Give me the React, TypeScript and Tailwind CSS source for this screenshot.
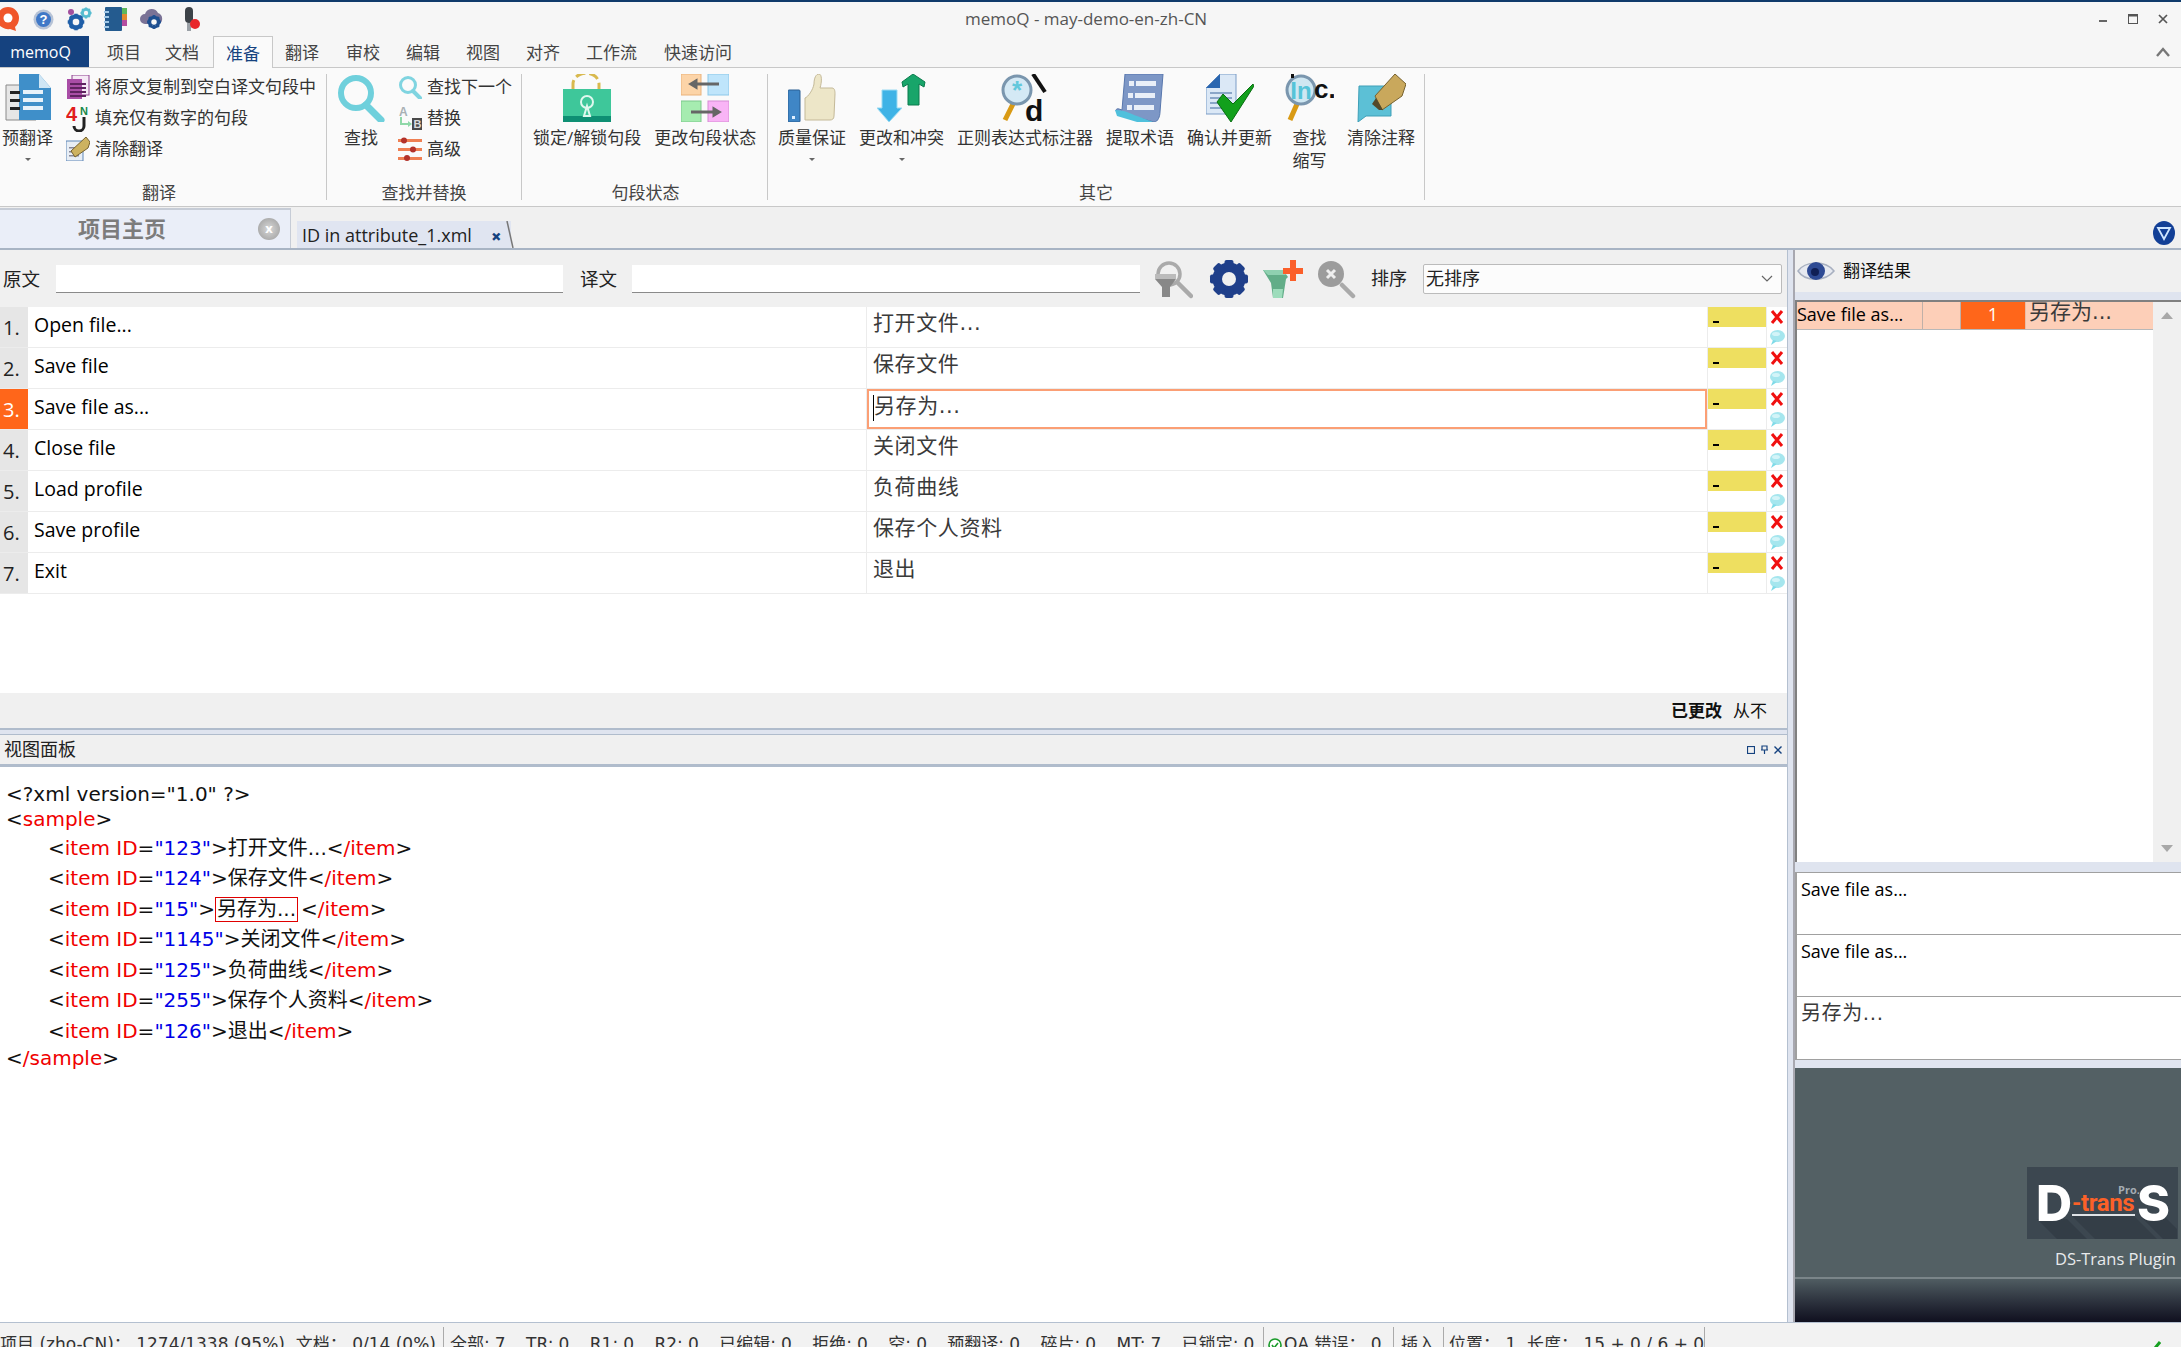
import React from "react";

const Svg = ({ w, h = w, vb, children, className = "" }: { w: number; h?: number; vb?: string; children: React.ReactNode; className?: string }) => (
  <svg width={w} height={h} viewBox={vb ?? `0 0 ${w} ${h}`} className={`shrink-0 block ${className}`}>{children}</svg>
);

/* ---------- quick access icons ---------- */
const QLogo = () => (
  <Svg w={20} h={24} vb="0 0 20 24">
    <path d="M-3 11a11 11 0 0 1 22 0c0 4-1.5 7-4 9l1 4-6-2A11 11 0 0 1-3 11z" fill="#f0562a" />
    <circle cx="8" cy="11" r="4.5" fill="#fff" />
  </Svg>
);
const HelpIcon = () => (
  <Svg w={21} h={21} vb="0 0 21 21">
    <circle cx="10.5" cy="10.5" r="10" fill="#b7c3d6" />
    <circle cx="10.5" cy="10.5" r="7.5" fill="#3f78c7" />
    <text x="10.5" y="15" textAnchor="middle" fontSize="13" fontWeight="700" fill="#fff" fontFamily="Liberation Sans">?</text>
  </Svg>
);
const GearShape = ({ cx, cy, r, fill }: { cx: number; cy: number; r: number; fill: string }) => (
  <g>
    <circle cx={cx} cy={cy} r={r} fill="none" stroke={fill} strokeWidth={r * 0.55} />
    {[0, 45, 90, 135].map((a) => (
      <rect key={a} x={cx - r * 0.28} y={cy - r * 1.38} width={r * 0.56} height={r * 2.76} fill={fill} transform={`rotate(${a} ${cx} ${cy})`} />
    ))}
    <circle cx={cx} cy={cy} r={r * 0.55} fill="#f7f7f7" />
  </g>
);
const GearsIcon = () => (
  <Svg w={25} h={24} vb="0 0 25 24">
    <circle cx="4" cy="5" r="3" fill="#a14f9d" />
    <GearShape cx={19} cy={6} r={4} fill="#56bcd0" />
    <GearShape cx={9} cy={15} r={6} fill="#1f5fa8" />
  </Svg>
);
const NotebookIcon = () => (
  <Svg w={24} h={24} vb="0 0 24 24">
    <rect x="1" y="0" width="17" height="24" rx="1" fill="#245b8f" />
    <path d="M18 1h5v6h-5z" fill="#5cb85c" />
    <path d="M18 7h5v6h-5z" fill="#e08a2e" />
    <path d="M18 13h5v6h-5z" fill="#b34c9f" />
    {[4, 9, 14, 19].map((y) => (
      <rect key={y} x="0" y={y} width="5" height="2" fill="#9fc6e6" />
    ))}
  </Svg>
);
const CloudIcon = () => (
  <Svg w={24} h={24} vb="0 0 24 24">
    <path d="M5 17a5 5 0 0 1 0-10 7 7 0 0 1 13-1 6 6 0 0 1 1 11z" fill="#7a7296" />
    <GearShape cx={14} cy={15} r={5} fill="#1d4f91" />
  </Svg>
);
const MicIcon = () => (
  <Svg w={19} h={24} vb="0 0 19 24">
    <rect x="3" y="0" width="8" height="16" rx="4" fill="#3c4248" />
    <rect x="5" y="16" width="4" height="8" fill="#9aa0a6" />
    <circle cx="13" cy="17" r="5" fill="#e8262a" />
  </Svg>
);

/* ---------- ribbon large icons (48x48) ---------- */
const PreTranslate = () => (
  <Svg w={50} h={48} vb="0 0 50 48">
    <path d="M3 11h30v35H3z" fill="#e6e6e6" stroke="#8a8a8a" />
    <path d="M16 0h20l12 14v32H16z" fill="#3f8fc9" />
    <path d="M36 0l12 14H36z" fill="#cfe6f5" />
    {[16, 24, 32].map((y) => (
      <rect key={y} x="20" y={y} width="20" height="4" fill="#e8f2fa" />
    ))}
    {[17, 25, 33].map((y) => (
      <rect key={y} x="7" y={y} width="10" height="3" fill="#222" />
    ))}
  </Svg>
);
const BigSearch = () => (
  <Svg w={48} h={48}>
    <circle cx="19" cy="19" r="15" fill="none" stroke="#6fd0dc" strokeWidth="6" />
    <path d="M29 31l15 15" stroke="#6fd0dc" strokeWidth="7" strokeLinecap="round" />
  </Svg>
);
const LockIcon = () => (
  <Svg w={48} h={48}>
    <path d="M10 16V10a12 10 0 0 1 26 0v6" fill="none" stroke="#d8b94e" strokeWidth="3" strokeDasharray="10 4" />
    <rect x="0" y="15" width="48" height="33" fill="#3ec79a" />
    <rect x="0" y="42" width="48" height="6" fill="#0e8f73" />
    <circle cx="24" cy="28" r="6" fill="none" stroke="#dff8ee" strokeWidth="2" />
    <path d="M21 42l3-10 3 10z" fill="none" stroke="#dff8ee" strokeWidth="2" />
  </Svg>
);
const StatusIcon = () => (
  <Svg w={48} h={48}>
    <rect x="0" y="0" width="20" height="21" fill="#fcd4a8" stroke="#eab27a" />
    <rect x="27" y="0" width="21" height="21" fill="#bfe5fb" stroke="#8cc7e8" />
    <rect x="0" y="27" width="20" height="21" fill="#a6ecb0" stroke="#7cc88c" />
    <rect x="27" y="27" width="21" height="21" fill="#f9b4f6" stroke="#d68cd4" />
    <path d="M10 10h28M10 10l5-3v6z" stroke="#666" strokeWidth="3" fill="#666" />
    <path d="M10 38h28M38 38l-5-3v6z" stroke="#666" strokeWidth="3" fill="#666" />
  </Svg>
);
const QaIcon = () => (
  <Svg w={48} h={48}>
    <rect x="0" y="16" width="12" height="32" rx="1" fill="#3f86c6" stroke="#2b5f93" />
    <rect x="4" y="42" width="3" height="3" fill="#dfefff" />
    <path d="M17 46V24c3-1 8-8 9-14 0-6 2-10 5-10s3 8 1 14h12c3 0 3 4 3 6l-1 22c0 3-2 4-4 4H20c-2 0-3 0-3 0z" fill="#ede6c8" stroke="#c4b998" />
  </Svg>
);
const ChangeIcon = () => (
  <Svg w={49} h={48} vb="0 0 49 48">
    <path d="M25 8L36 -0 48 8l-1 5-5-3v21H31V10l-5 3z" fill="#18a56a" stroke="#0a7b4c" />
    <path d="M5 16h15v18h5L12 48 0 34h5z" fill="#3fb3e6" stroke="#9adbf3" />
  </Svg>
);
const RegexIcon = () => (
  <Svg w={50} h={48} vb="0 0 50 48">
    <path d="M13 30L5 46" stroke="#d99a14" strokeWidth="5" />
    <circle cx="17" cy="16" r="14" fill="#d4e9f5" stroke="#7a96ae" strokeWidth="3" />
    <text x="17" y="25" textAnchor="middle" fontSize="26" fontWeight="700" fill="#62c8dc" fontFamily="Liberation Sans">*</text>
    <path d="M33 0l12 18" stroke="#111" strokeWidth="4" />
    <text x="25" y="47" fontSize="30" fontWeight="700" fill="#111" fontFamily="Liberation Sans">d</text>
  </Svg>
);
const TermIcon = () => (
  <Svg w={50} h={48} vb="0 0 50 48">
    <path d="M10 0h38l-3 38c0 4-2 10-6 10L2 38c-2-1-1-4 2-3l3 1z" fill="#7d97c6" stroke="#5877ad" />
    <path d="M0 36c10 0 16 4 22 6l16 6H22L2 42z" fill="#4fc0dc" />
    {[7, 19, 31].map((y, i) => (
      <g key={y}>
        <rect x={14 - i} y={y} width="5" height="5" fill="#e9eff8" />
        <rect x={21 - i} y={y} width="20" height="5" fill="#e9eff8" />
      </g>
    ))}
  </Svg>
);
const ConfirmIcon = () => (
  <Svg w={48} h={48}>
    <path d="M0 14L14 0h16v40H0z" fill="#dbe8f6" stroke="#7a9cc6" />
    <path d="M0 14L14 0v14z" fill="#2a66b0" />
    {[18, 23, 28, 33].map((y) => (
      <rect key={y} x="4" y={y} width="22" height="2" fill="#8aa6c8" />
    ))}
    <path d="M11 28l14 20L48 12 47 10 27 30 17 20z" fill="#12a01c" stroke="#0a6d12" />
  </Svg>
);
const AbbrevIcon = () => (
  <Svg w={49} h={48} vb="0 0 49 48">
    <path d="M12 30L5 46" stroke="#d99a14" strokeWidth="5" />
    <circle cx="16" cy="16" r="14" fill="#cfe7f2" stroke="#7a96ae" strokeWidth="3" />
    <text x="16" y="25" textAnchor="middle" fontSize="24" fontWeight="700" fill="#56c3d8" fontFamily="Liberation Sans">In</text>
    <path d="M6 0h3v4H6z" fill="#111" />
    <text x="29" y="24" fontSize="26" fontWeight="700" fill="#111" fontFamily="Liberation Sans">c.</text>
  </Svg>
);
const ClearNoteIcon = () => (
  <Svg w={49} h={48} vb="0 0 49 48">
    <path d="M2 12h32v30H9l-8 6z" fill="#5cc0d6" stroke="#3e9fb7" />
    <path d="M18 22L38 0l11 10-4 12-20 14z" fill="#c9a85c" stroke="#77622f" />
    <path d="M19 24l7 12-4 0-7-6z" fill="#544a2a" />
  </Svg>
);

/* ---------- ribbon small icons ---------- */
const CopyIcon = () => (
  <Svg w={24} h={24}>
    <rect x="6" y="0" width="17" height="20" fill="#f5eaf5" stroke="#8e3f8e" />
    <rect x="1" y="4" width="15" height="20" fill="#a94da6" />
    {[8, 12, 16, 20].map((y) => (
      <rect key={y} x="4" y={y} width="16" height="2" fill="#5f2360" />
    ))}
  </Svg>
);
const FillIcon = () => (
  <Svg w={24} h={28} vb="0 0 24 28">
    <text x="0" y="17" fontSize="20" fontWeight="700" fill="#e11d1d" fontFamily="Liberation Sans">4</text>
    <text x="14" y="11" fontSize="11" fontWeight="700" fill="#17884a" fontFamily="Liberation Sans">N</text>
    <path d="M18 13v9a5 5 0 0 1-10 0" fill="none" stroke="#222" strokeWidth="3" />
  </Svg>
);
const ClearIcon = () => (
  <Svg w={24} h={24}>
    <rect x="0" y="4" width="17" height="20" fill="#e8eef5" stroke="#5f87b7" />
    {[10, 14, 18].map((y) => (
      <rect key={y} x="3" y={y} width="10" height="1.5" fill="#889" />
    ))}
    <path d="M5 14L20 0l4 5-2 6L9 20z" fill="#cdb260" stroke="#77622f" />
  </Svg>
);
const SmallSearch = () => (
  <Svg w={24} h={24}>
    <circle cx="10" cy="10" r="7.5" fill="none" stroke="#7fd4e0" strokeWidth="3" />
    <path d="M15 16l7 7" stroke="#7fd4e0" strokeWidth="4" strokeLinecap="round" />
  </Svg>
);
const ReplaceIcon = () => (
  <Svg w={24} h={24}>
    <text x="1" y="10" fontSize="12" fontWeight="700" fill="#a8b0b5" fontFamily="Liberation Sans">A</text>
    <path d="M3 11v7h8" fill="none" stroke="#8fd8a8" strokeWidth="2" />
    <path d="M10 15l4 3-4 3z" fill="#8fd8a8" />
    <rect x="14" y="12" width="10" height="12" fill="#4a4a4a" />
    <text x="15.5" y="22" fontSize="11" fontWeight="700" fill="#dcdcdc" fontFamily="Liberation Sans">B</text>
  </Svg>
);
const AdvIcon = () => (
  <Svg w={24} h={24}>
    {[2, 11, 20].map((y) => (
      <rect key={y} x="0" y={y} width="24" height="3" fill="#ef7f52" />
    ))}
    <circle cx="6" cy="3.5" r="3" fill="#b3322a" />
    <circle cx="15" cy="12.5" r="3" fill="#b3322a" />
    <circle cx="9" cy="21" r="3" fill="#b3322a" />
  </Svg>
);

/* ---------- ribbon parts ---------- */
const Caret = () => <span className="mx-auto mt-[9px] block h-0 w-0 border-x-[3px] border-t-[3px] border-x-transparent border-t-[#666]" />;

const BigBtn = ({ icon, label, label2, caret }: { icon: React.ReactNode; label: string; label2?: string; caret?: boolean }) => (
  <div className="flex shrink-0 flex-col items-center">
    <div className="flex h-[48px] items-center">{icon}</div>
    <div className="mt-[4px] whitespace-nowrap text-center text-[17px] leading-[23px] text-[#333]">{label}</div>
    {label2 && <div className="whitespace-nowrap text-center text-[17px] leading-[23px] text-[#333]">{label2}</div>}
    {caret && <Caret />}
  </div>
);

const SmallBtn = ({ icon, label }: { icon: React.ReactNode; label: string }) => (
  <div className="flex h-[31px] items-center">
    <div className="flex w-[24px] justify-center">{icon}</div>
    <span className="ml-[5px] whitespace-nowrap text-[17px] text-[#333]">{label}</span>
  </div>
);

const Group = ({ title, w, className, titleClass = "", children }: { title: string; w: string; className: string; titleClass?: string; children: React.ReactNode }) => (
  <div className={`flex h-[126px] shrink-0 flex-col border-r border-[#c8c8c8] ${w}`}>
    <div className={`flex flex-1 gap-[13px] ${className}`}>{children}</div>
    <div className={`h-[15px] text-center text-[17px] leading-[15px] text-[#444] ${titleClass}`}>{title}</div>
  </div>
);

const tabs: [string, string][] = [
  ["项目", "ml-[18px]"],
  ["文档", "ml-[24px]"],
  ["准备", "ml-[14px]"],
  ["翻译", "ml-[12px]"],
  ["审校", "ml-[27px]"],
  ["编辑", "ml-[26px]"],
  ["视图", "ml-[26px]"],
  ["对齐", "ml-[26px]"],
  ["工作流", "ml-[26px]"],
  ["快速访问", "ml-[27px]"],
];

const Ribbon = () => (
  <div className="flex h-[139px] shrink-0 border-b border-[#c8c8c8] bg-[#fafafa] pt-[6px]">
    <Group title="翻译" w="w-[327px]" className="pl-[2px]" titleClass="pr-[8px]">
      <BigBtn icon={<PreTranslate />} label="预翻译" caret />
      <div className="-mt-[3px] flex flex-col">
        <SmallBtn icon={<CopyIcon />} label="将原文复制到空白译文句段中" />
        <SmallBtn icon={<FillIcon />} label="填充仅有数字的句段" />
        <SmallBtn icon={<ClearIcon />} label="清除翻译" />
      </div>
    </Group>
    <Group title="查找并替换" w="w-[195px]" className="pl-[10px]">
      <BigBtn icon={<BigSearch />} label="查找" />
      <div className="-mt-[3px] flex flex-col">
        <SmallBtn icon={<SmallSearch />} label="查找下一个" />
        <SmallBtn icon={<ReplaceIcon />} label="替换" />
        <SmallBtn icon={<AdvIcon />} label="高级" />
      </div>
    </Group>
    <Group title="句段状态" w="w-[246px]" className="pl-[11px]" titleClass="pl-[2px]">
      <BigBtn icon={<LockIcon />} label="锁定/解锁句段" />
      <BigBtn icon={<StatusIcon />} label="更改句段状态" />
    </Group>
    <Group title="其它" w="w-[657px]" className="pl-[10px]">
      <BigBtn icon={<QaIcon />} label="质量保证" caret />
      <BigBtn icon={<ChangeIcon />} label="更改和冲突" caret />
      <BigBtn icon={<RegexIcon />} label="正则表达式标注器" />
      <BigBtn icon={<TermIcon />} label="提取术语" />
      <BigBtn icon={<ConfirmIcon />} label="确认并更新" />
      <BigBtn icon={<AbbrevIcon />} label="查找" label2="缩写" />
      <BigBtn icon={<ClearNoteIcon />} label="清除注释" />
    </Group>
  </div>
);

/* ---------- header ---------- */
const Header = () => (
  <div className="shrink-0">
    <div className="flex h-[36px] items-center border-t-2 border-[#0f3a6b] bg-[#f6f6f6]">
      <div className="flex w-[965px] shrink-0 items-center">
        <QLogo />
        <div className="ml-[13px]"><HelpIcon /></div>
        <div className="ml-[13px]"><GearsIcon /></div>
        <div className="ml-[12px]"><NotebookIcon /></div>
        <div className="ml-[12px]"><CloudIcon /></div>
        <div className="ml-[18px]"><MicIcon /></div>
      </div>
      <span className="whitespace-nowrap text-[17px] text-[#555]">memoQ - may-demo-en-zh-CN</span>
      <div className="ml-auto mr-[13px] flex items-center gap-[20px]">
        <Svg w={10} h={10}><rect x="1" y="6" width="8" height="2" fill="#666" /></Svg>
        <Svg w={10} h={10}><rect x="0.5" y="0.5" width="9" height="9" fill="none" stroke="#555" /><rect x="0" y="0" width="10" height="2.5" fill="#555" /></Svg>
        <Svg w={10} h={10}><path d="M1 1l8 8M9 1l-8 8" stroke="#555" strokeWidth="1.7" /></Svg>
      </div>
    </div>
    <div className="flex h-[32px] items-stretch border-b border-[#c8c8c8] bg-[#f6f6f6]">
      <div className="flex w-[89px] items-center justify-center bg-[#15427f] pr-[8px] text-[16px] text-white">memoQ</div>
      <div className="flex">
        {tabs.map(([t, m]) => (
          t === "准备" ? (
            <div key={t} className={`relative z-10 flex h-[32px] w-[60px] items-center justify-center border-x border-t border-[#c8c8c8] bg-[#fafafa] pt-[2px] text-[17px] text-[#15427f] ${m}`}>{t}</div>
          ) : (
            <div key={t} className={`flex items-center pt-[2px] text-[17px] text-[#444] ${m}`}>{t}</div>
          )
        ))}
      </div>
      <div className="ml-auto mr-[11px] flex items-center">
        <Svg w={14} h={10}><path d="M1 9l6-7 6 7" fill="none" stroke="#777" strokeWidth="2.4" /></Svg>
      </div>
    </div>
    <Ribbon />
    <div className="flex h-[43px] items-end border-b-2 border-[#a8b4c4] bg-[#f0f0f0]">
      <div className="flex h-[40px] w-[291px] items-center border-r border-t-2 border-[#c6ccd6] bg-[#eaeef8]">
        <span className="ml-[78px] whitespace-nowrap pb-[2px] text-[22px] font-bold text-[#7c7c7c]">项目主页</span>
        <span className="ml-[92px] flex h-[22px] w-[22px] shrink-0 items-center justify-center rounded-full bg-[radial-gradient(circle,#d8d8d8,#9a9a9a)] text-[13px] font-bold text-white">x</span>
      </div>
      <div className="relative ml-[6px] flex h-[27px] w-[214px] items-center bg-[#e0e5f1] pl-[5px] pt-[2px]">
        <span className="whitespace-nowrap text-[18px] text-[#222]">ID in attribute_1.xml</span>
        <span className="ml-[19px] text-[18px] font-extrabold leading-none text-[#15427f]">×</span>
        <Svg w={8} h={27} className="absolute -right-[3px] top-0"><path d="M1 0l6 27" stroke="#777" strokeWidth="1.5" /></Svg>
      </div>
      <div className="ml-auto mb-[3px] mr-[6px]">
        <Svg w={22} h={24}>
          <ellipse cx="11" cy="12" rx="11" ry="12" fill="#123f96" />
          <path d="M5 7h12l-6 11z" fill="none" stroke="#cfe6ff" strokeWidth="1.8" />
        </Svg>
      </div>
    </div>
  </div>
);

/* ---------- filter bar ---------- */
const GrayFunnelSearch = () => (
  <Svg w={40} h={40}>
    <circle cx="16" cy="15" r="11" fill="none" stroke="#aaa" strokeWidth="3.5" />
    <path d="M25 24l13 13" stroke="#aaa" strokeWidth="4.5" strokeLinecap="round" />
    <path d="M2 20h21l-6 8v10H9V28z" fill="#888" />
    <rect x="2" y="15" width="21" height="5" fill="#bbb" />
  </Svg>
);
const BlueGear = () => (
  <Svg w={40} h={40}>
    <circle cx="20" cy="20" r="12" fill="none" stroke="#1f3f8a" strokeWidth="9" />
    {[0, 45, 90, 135].map((a) => (
      <rect key={a} x="15.5" y="1" width="9" height="38" rx="2" fill="#1f3f8a" transform={`rotate(${a} 20 20)`} />
    ))}
    <circle cx="20" cy="20" r="7" fill="#f0f0f0" />
  </Svg>
);
const FunnelPlus = () => (
  <Svg w={40} h={40}>
    <path d="M0 11h20l5 7-2 2-3 19H10L8 24z" fill="#62ad88" />
    <path d="M0 11h20l3 5H5z" fill="#8fd0b0" />
    <path d="M10 30h10l-1 9h-9z" fill="#9ddcbb" />
    <path d="M20 9h7V1h6v8h7v6h-7v7h-6v-7h-7z" fill="#fb5f2a" />
  </Svg>
);
const XSearch = () => (
  <Svg w={40} h={40}>
    <circle cx="15" cy="15" r="13" fill="#9c9c9c" />
    <path d="M26 26l11 11" stroke="#aaa" strokeWidth="4.5" strokeLinecap="round" />
    <path d="M11 11l8 8M19 11l-8 8" stroke="#eee" strokeWidth="3" />
  </Svg>
);

const FilterBar = () => (
  <div className="flex h-[57px] shrink-0 items-center bg-[#f0f0f0]">
    <span className="ml-[3px] w-[53px] text-[18.5px] text-[#222]">原文</span>
    <div className="h-[28px] w-[507px] border-b border-[#8a8a8a] bg-white" />
    <span className="ml-[17px] w-[52px] text-[18.5px] text-[#222]">译文</span>
    <div className="h-[28px] w-[508px] border-b border-[#8a8a8a] bg-white" />
    <div className="ml-[13px]"><GrayFunnelSearch /></div>
    <div className="ml-[16px]"><BlueGear /></div>
    <div className="ml-[14px]"><FunnelPlus /></div>
    <div className="ml-[13px]"><XSearch /></div>
    <span className="ml-[15px] w-[52px] text-[18px] text-[#222]">排序</span>
    <div className="flex h-[30px] w-[359px] items-center justify-between rounded-[2px] border border-[#bbb] bg-[#fcfcfc] pl-[2px] pr-[8px]">
      <span className="text-[18px] text-[#222]">无排序</span>
      <Svg w={12} h={8}><path d="M1 1l5 5 5-5" fill="none" stroke="#666" strokeWidth="1.2" /></Svg>
    </div>
  </div>
);

/* ---------- grid ---------- */
const rows: [string, string][] = [
  ["Open file...", "打开文件..."],
  ["Save file", "保存文件"],
  ["Save file as...", "另存为..."],
  ["Close file", "关闭文件"],
  ["Load profile", "负荷曲线"],
  ["Save profile", "保存个人资料"],
  ["Exit", "退出"],
];

const RedX = () => (
  <Svg w={14} h={14}><path d="M2 1l10 12M12 1L2 13" stroke="#f01010" strokeWidth="3" /></Svg>
);
const Bubble = () => (
  <Svg w={15} h={15}>
    <ellipse cx="7.5" cy="6" rx="7.5" ry="6" fill="#a5e6ee" />
    <path d="M3 10L1 15l6-4z" fill="#7fdbe8" />
    <ellipse cx="6" cy="4" rx="4" ry="2" fill="#d3f4f8" />
  </Svg>
);

const Row = ({ n, src, tgt, active }: { n: number; src: string; tgt: string; active: boolean }) => (
  <div className="flex h-[41px] shrink-0 border-b border-[#ececec] bg-white">
    <div className={`flex w-[28px] shrink-0 items-end pb-[6px] pl-[3px] text-[20px] leading-[26px] ${active ? "bg-[#ff661a] text-white" : "bg-[#e6e6e6] text-[#222]"}`}>{n}.</div>
    <div className="flex w-[839px] shrink-0 items-start border-r border-[#ececec] pl-[6px] pt-[4px] text-[19.5px] leading-[28px] text-black">{src}</div>
    {active ? (
      <div className="relative flex h-[40px] w-[840px] shrink-0 items-start border-2 border-[#fb9f75] pl-[4px] pt-[1px] text-[21px] leading-[28px] tracking-[0.6px] text-[#3a3a3a] [font-family:'DejaVu_Sans','Noto_Sans_CJK_SC',sans-serif]">
        <span className="mt-[3px] h-[26px] w-px bg-black" />
        {tgt}
      </div>
    ) : (
      <div className="flex w-[840px] shrink-0 items-start pl-[6px] pt-[2px] text-[21px] leading-[28px] tracking-[0.6px] text-[#3a3a3a] [font-family:'DejaVu_Sans','Noto_Sans_CJK_SC',sans-serif]">{tgt}</div>
    )}
    <div className="flex w-[60px] shrink-0 flex-col border-x border-[#ececec]">
      <div className="h-[20px] bg-[#eedf60] pl-[5px] pt-[14px]"><div className="h-[2px] w-[6px] bg-black" /></div>
    </div>
    <div className="ml-[2px] flex w-[16px] flex-col items-center">
      <div className="flex h-[20px] items-center"><RedX /></div>
      <div className="flex h-[20px] items-center"><Bubble /></div>
    </div>
  </div>
);

/* ---------- xml ---------- */
const Tok = ({ c, children }: { c: string; children: React.ReactNode }) => <span className={c}>{children}</span>;
const R = "text-[#f00000]";
const B = "text-[#0000e6]";
const XmlItem = ({ id, text, boxed }: { id: string; text: string; boxed?: boolean }) => (
  <div className="flex h-[30.5px] items-center whitespace-pre pl-[48px]">
    <span>&lt;</span><Tok c={R}>item ID</Tok><span>=</span><Tok c={B}>"{id}"</Tok><span>&gt;</span>
    {boxed ? (
      <span className="mr-[3px] border border-[#e00000] px-px leading-[23px]">{text}</span>
    ) : (
      <span>{text}</span>
    )}
    <span>&lt;</span><Tok c={R}>/item</Tok><span>&gt;</span>
  </div>
);

const XmlPane = () => (
  <div className="flex-1 overflow-hidden bg-white pt-[15px] text-[20px] leading-[25px] text-[#111] [font-family:'DejaVu_Sans','Noto_Sans_CJK_SC',sans-serif]">
    <div className="h-[25px] whitespace-pre pl-[6px]">&lt;?xml version="1.0" ?&gt;</div>
    <div className="mb-[1px] h-[25px] pl-[6px]">&lt;<Tok c={R}>sample</Tok>&gt;</div>
    <XmlItem id="123" text="打开文件..." />
    <XmlItem id="124" text="保存文件" />
    <XmlItem id="15" text="另存为..." boxed />
    <XmlItem id="1145" text="关闭文件" />
    <XmlItem id="125" text="负荷曲线" />
    <XmlItem id="255" text="保存个人资料" />
    <XmlItem id="126" text="退出" />
    <div className="-mt-[1px] h-[25px] pl-[6px]">&lt;<Tok c={R}>/sample</Tok>&gt;</div>
  </div>
);

const LeftPane = () => (
  <div className="flex w-[1788px] shrink-0 flex-col border-r border-[#b4c0d0]">
    <FilterBar />
    <div className="flex h-[386px] shrink-0 flex-col bg-white">
      {rows.map(([s, t], i) => (
        <Row key={s} n={i + 1} src={s} tgt={t} active={i === 2} />
      ))}
    </div>
    <div className="flex h-[37px] shrink-0 items-center justify-end border-b-2 border-[#b0bccc] bg-[#f0f0f0] pr-[20px] text-[17px] text-[#111]">
      <b>已更改</b>
      <span className="ml-[11px]">从不</span>
    </div>
    <div className="h-[4px] shrink-0 bg-[#dfe4ef]" />
    <div className="flex h-[33px] shrink-0 items-center border-y border-b-[3px] border-t-[#b0bccc] border-b-[#b0bccc] bg-[#f0f0f0] pl-[4px] text-[18px] text-[#222]">
      <span>视图面板</span>
      <div className="ml-auto mr-[5px] flex items-center gap-[6px]">
        <Svg w={8} h={8}><rect x="0.5" y="0.5" width="7" height="7" fill="none" stroke="#15427f" strokeWidth="1.2" /></Svg>
        <Svg w={7} h={9}><path d="M1 1h5v4H1zM3.5 5v4M0 5h7" fill="none" stroke="#15427f" strokeWidth="1.2" /></Svg>
        <Svg w={8} h={8}><path d="M0.5 0.5l7 7M7.5 0.5l-7 7" stroke="#15427f" strokeWidth="1.4" /></Svg>
      </div>
    </div>
    <XmlPane />
  </div>
);

/* ---------- right ---------- */
const Eye = () => (
  <Svg w={38} h={24}>
    <path d="M1 12C8 2 28 1 37 12 28 23 8 23 1 12z" fill="#e6e9f0" stroke="#a8b0c0" strokeWidth="1.5" />
    <circle cx="19" cy="12" r="9" fill="#2e4a94" />
    <circle cx="18" cy="13" r="4" fill="#101f55" />
  </Svg>
);

const Logo = () => (
  <div className="relative h-[72px] w-[151px] overflow-hidden bg-[#3c4750] text-white">
    <Svg w={151} h={72} className="absolute left-0 top-0">
      <path d="M10 52h30L60 72H30z" fill="#333d46" />
      <path d="M44 48h62l24 24H68z" fill="#343e47" />
      <path d="M112 48h24l14 14v10h-14z" fill="#333d46" />
    </Svg>
    <span className="absolute left-[9px] top-[7px] text-[50px] font-extrabold leading-[58px] [font-family:'Inter',sans-serif]">D</span>
    <span className="absolute left-[91px] top-[17px] text-[11px] font-bold leading-[12px] text-[#a4acb2]">Pro.</span>
    <span className="absolute left-[45px] top-[22px] text-[24px] font-bold leading-[28px] tracking-[-0.4px] text-[#fb6128] [font-family:'Roboto',sans-serif]">-trans</span>
    <span className="absolute left-[45px] top-[47px] h-[2px] w-[63px] bg-[#dfe3e6]" />
    <span className="absolute left-[110px] top-[7px] text-[50px] font-extrabold leading-[58px] [font-family:'Inter',sans-serif]">S</span>
  </div>
);

const InfoBox = ({ children, h }: { children: React.ReactNode; h: string }) => (
  <div className={`shrink-0 border-b border-[#a0a0a0] bg-white pl-[4px] pt-[4px] ${h}`}>{children}</div>
);

const RightPane = () => (
  <div className="flex min-w-0 flex-1 flex-col">
    <div className="flex h-[42px] shrink-0 items-center bg-[#f0f0f0] pl-[2px]">
      <Eye />
      <span className="ml-[8px] text-[17px] text-[#111]">翻译结果</span>
    </div>
    <div className="h-[8px] shrink-0 bg-[#dfe4ef]" />
    <div className="flex h-[562px] shrink-0 border-l-2 border-t-2 border-[#808080] bg-white">
      <div className="flex-1">
        <div className="flex h-[28px] border-b border-[#b8b8b8] bg-[#fdcfb8] text-[18px] leading-[25px]">
          <div className="w-[126px] border-r border-[#c0b0a8] text-black">Save file as...</div>
          <div className="w-[38px] border-r border-[#c0b0a8]" />
          <div className="w-[64px] bg-[#ff661a] text-center text-[18px] text-white">1</div>
          <div className="border-l border-[#e8bda8] pl-[3px] text-[21px] leading-[21px] text-[#3a3a3a] [font-family:'DejaVu_Sans','Noto_Sans_CJK_SC',sans-serif]">另存为...</div>
        </div>
      </div>
      <div className="flex w-[28px] flex-col items-center justify-between bg-[#f0f0f0] py-[10px]">
        <span className="h-0 w-0 border-x-[6px] border-b-[7px] border-x-transparent border-b-[#a8a8a8]" />
        <span className="h-0 w-0 border-x-[6px] border-t-[7px] border-x-transparent border-t-[#a8a8a8]" />
      </div>
    </div>
    <div className="h-[11px] shrink-0 border-b border-[#a0a0a0] bg-[#dfe4ef]" />
    <div className="flex shrink-0 flex-col border-l-2 border-[#a0a0a0] text-[18px] leading-[24px] text-black">
      <InfoBox h="h-[62px]">Save file as...</InfoBox>
      <InfoBox h="h-[62px]">Save file as...</InfoBox>
      <InfoBox h="h-[63px]"><span className="text-[20px] tracking-[0.6px] text-[#3a3a3a] [font-family:'DejaVu_Sans','Noto_Sans_CJK_SC',sans-serif]">另存为...</span></InfoBox>
    </div>
    <div className="h-[8px] shrink-0 bg-[#dfe4ef]" />
    <div className="flex flex-1 flex-col items-end justify-end bg-[#536064]">
      <div className="mb-[8px] mr-[3px]"><Logo /></div>
      <div className="mb-[6px] mr-[5px] text-[16.5px] leading-[24px] text-[#e8eaec]">DS-Trans Plugin</div>
      <div className="h-[45px] w-full border-t-2 border-[#7a8589] bg-gradient-to-b from-[#505d62] to-[#10101f]" />
    </div>
  </div>
);

/* ---------- status bar ---------- */
const StatusSep = () => <span className="mx-[2px] h-[26px] w-px shrink-0 self-start bg-[#aaa]" />;
const StatusBar = () => (
  <div className="flex h-[25px] shrink-0 overflow-hidden border-t border-[#b4c0d0] bg-[#f2f2f2] pt-[4px] text-[17px] leading-[34px] text-[#333] [font-family:'DejaVu_Sans','Noto_Sans_CJK_SC',sans-serif]">
    <div className="w-[441px] shrink-0 whitespace-pre">项目 (zho-CN)： 1274/1338 (95%)  文档： 0/14 (0%)</div>
    <StatusSep />
    <div className="w-[815px] shrink-0 whitespace-pre pl-[4px] [word-spacing:-0.3px]">全部: 7    TR: 0    R1: 0    R2: 0    已编辑: 0    拒绝: 0    空: 0    预翻译: 0    碎片: 0    MT: 7    已锁定: 0</div>
    <StatusSep />
    <div className="flex w-[125px] shrink-0 whitespace-pre">
      <Svg w={14} h={14} className="ml-[2px] mt-[11px]">
        <circle cx="7" cy="7" r="6" fill="#fff" stroke="#1a9b2a" strokeWidth="1.6" />
        <path d="M4 7l2 3 4-5" fill="none" stroke="#1a9b2a" strokeWidth="1.6" />
      </Svg>
      <span className="ml-[2px]">QA 错误： 0</span>
    </div>
    <StatusSep />
    <div className="w-[45px] shrink-0 pl-[5px]">插入</div>
    <StatusSep />
    <div className="w-[256px] shrink-0 whitespace-pre pl-[3px]">位置： 1  长度： 15 + 0 / 6 + 0</div>
    <StatusSep />
    <div className="ml-auto mr-[20px] mt-[14px]">
      <Svg w={16} h={12}><path d="M1 7l5 5L15 1" fill="none" stroke="#16a020" strokeWidth="3" /></Svg>
    </div>
  </div>
);

export default function App() {
  return (
    <div className="flex h-[1347px] w-[2181px] flex-col overflow-hidden bg-white [font-family:'Open_Sans','Noto_Sans_CJK_SC',sans-serif]">
      <Header />
      <div className="flex min-h-0 flex-1">
        <LeftPane />
        <div className="w-[7px] shrink-0 border-r-2 border-[#a8a8b0] bg-[#dfe4ef]" />
        <RightPane />
      </div>
      <StatusBar />
    </div>
  );
}
